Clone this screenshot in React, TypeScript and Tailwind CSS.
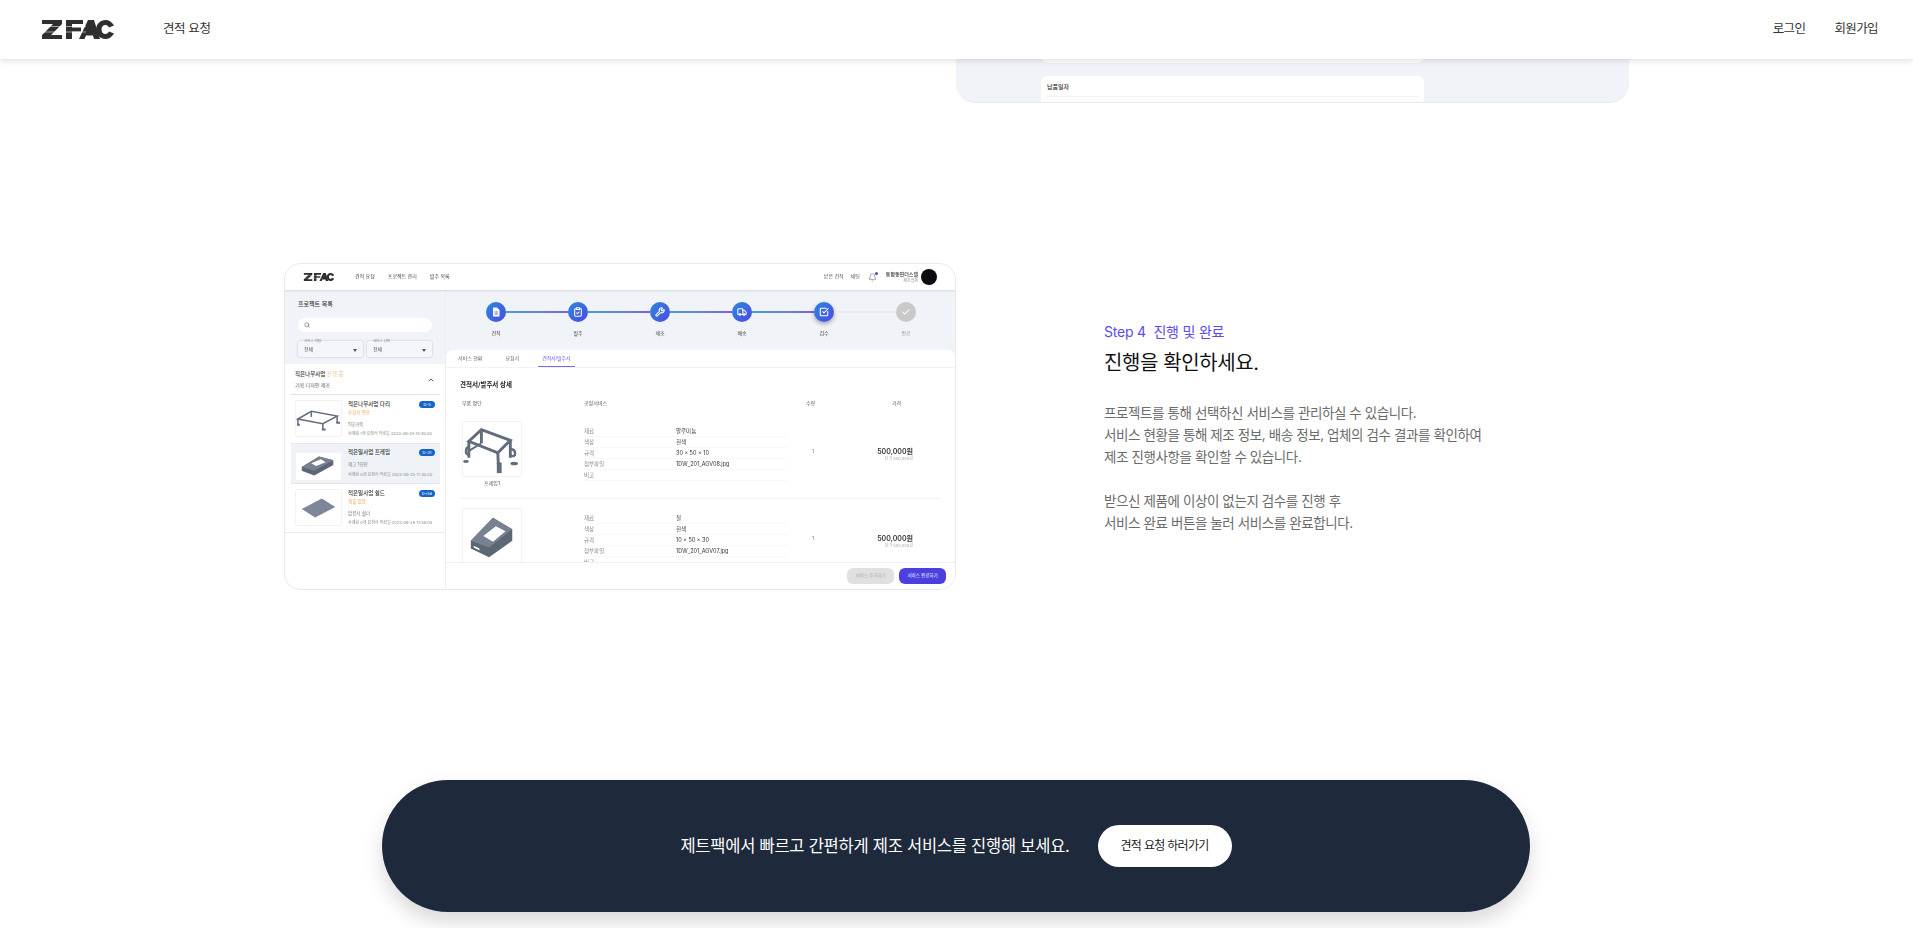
import { Bell, Check, ChevronUp, ClipboardCheck, Search, SquareCheckBig, Truck, Wrench } from 'lucide-react'

const FONT = "font-['Inter','Noto_Sans_CJK_KR',sans-serif]"

function Logo({ className }: { className: string }) {
  return (
    <svg viewBox="0 0 72 19" className={className} fill="#2f2f2f">
      <path d="M0 0h20v4L9 15h11v4H0v-4L11 4H0z" />
      <path d="M24 0h17v4H30v3.500h9v4h-9V19h-6z" />
      <path d="M37 19 46 0h6l6 19h-6l-1-3.500h-7L42.500 19z" />
      <path d="M72 5.500C70 2 67 0 63.500 0c-5 0-9.500 4-9.500 9.500S58.500 19 63.500 19c3.500 0 6.500-2 8.500-5.500l-5-2c-.8 1.500-2 2.500-3.500 2.500-2.500 0-4-2-4-4.500S61 5 63.500 5c1.500 0 2.700 1 3.500 2.500z" />
      <rect x="0" y="6" width="44" height="1" fill="#fff" opacity="0.55" />
      <rect x="0" y="11.500" width="44" height="1" fill="#fff" opacity="0.55" />
    </svg>
  )
}

function DocIcon() {
  return (
    <svg viewBox="0 0 10 10" className="w-[10px] h-[10px]">
      <path d="M2 .5h4L8.500 3v6.500H2z" fill="#fff" />
      <path d="M3.500 5h3.500M3.500 7h3.500" stroke="#2f6fdc" strokeWidth="0.9" />
    </svg>
  )
}

function FramePart({ className }: { className: string }) {
  return (
    <svg viewBox="0 0 60 56" className={className} fill="none" stroke="#626c7a" strokeWidth="3">
      <path d="M6 20 19 8l30 11-13 13z" />
      <path d="M6 20v17M36 32l1 20M49 19v18M19 8v14" />
      <path d="M19 22 6 30" strokeWidth="2" />
      <path d="M6 26c-2 0-3 2-3 5 0 2 2 3 3 3M49 28c3 0 5 2 5 5 0 2-2 3-5 2" strokeWidth="2.500" />
      <ellipse cx="3" cy="41" rx="3" ry="1.500" fill="#626c7a" stroke="none" />
      <ellipse cx="53" cy="43" rx="4" ry="1.800" fill="#626c7a" stroke="none" />
      <rect x="35" y="42" width="5" height="11" fill="#626c7a" stroke="none" />
    </svg>
  )
}

function BoxPart({ className }: { className: string }) {
  return (
    <svg viewBox="0 0 60 56" className={className}>
      <path d="M8 33 31 9l20 12v12L27 50 8 41z" fill="#5d6675" />
      <path d="M8 33 31 9l20 12-24 19z" fill="#78818f" />
      <path d="M21 28 34 18l10 5-13 11z" fill="#fff" />
      <path d="M11 38l6 3v2l-6-3z" fill="#fff" />
    </svg>
  )
}

function SideFrame({ className }: { className: string }) {
  return (
    <svg viewBox="0 0 47 37" className={className} fill="none" stroke="#666f7d" strokeWidth="1.600">
      <path d="M2 19 16 11l27 5-15 8z" />
      <path d="M2 19v6M28 24v6M43 16v7M16 11v6" />
      <path d="M1 25h3M27 30h4M42 23h4" strokeWidth="2" />
    </svg>
  )
}

function SideBox({ className }: { className: string }) {
  return (
    <svg viewBox="0 0 47 29" className={className}>
      <path d="M6 15 24 4l15 4v5L19 24 6 19z" fill="#5d6675" />
      <path d="M6 15 24 4l15 4-20 11z" fill="#78818f" />
      <path d="M16 11 26 7l5 3-10 4z" fill="#fff" />
    </svg>
  )
}

function PlatePart({ className }: { className: string }) {
  return (
    <svg viewBox="0 0 47 37" className={className}>
      <path d="M6 20 27 9l14 9-21 11z" fill="#7d8798" />
    </svg>
  )
}

const STEPS = [
  { label: '견적', icon: DocIcon },
  { label: '발주', icon: () => <ClipboardCheck size={10} color="#fff" strokeWidth={2.5} /> },
  { label: '제조', icon: () => <Wrench size={10} color="#fff" strokeWidth={2.5} /> },
  { label: '배송', icon: () => <Truck size={10} color="#fff" strokeWidth={2.5} /> },
  { label: '검수', icon: () => <SquareCheckBig size={10} color="#fff" strokeWidth={2.5} /> },
]

function Stepper() {
  return (
    <div className="h-[60px] pl-[9px] pt-[12px] bg-[#f0f3f8]">
      <div className="flex items-center pl-[31px]">
        {STEPS.map(s => (
          <div key={s.label} className="flex items-center">
            <div className={`w-5 h-5 rounded-full flex items-center justify-center bg-gradient-to-br from-[#2388dc] to-[#4a44e4] ${s.label === '검수' ? 'shadow-[0_2px_4px_rgba(0,0,0,0.35)]' : ''}`}>
              <s.icon />
            </div>
            {s.label === '검수' ? (
              <div className="w-[62px] h-[2px] bg-[#e9ecf1]" />
            ) : (
              <div className="w-[62px] h-[2px] bg-gradient-to-r from-[#3f9fdc] to-[#7a62e2]" />
            )}
          </div>
        ))}
        <div className="w-5 h-5 rounded-full flex items-center justify-center bg-[#c9c9c9]">
          <Check size={10} color="#fff" strokeWidth={2.5} />
        </div>
      </div>
      <div className="flex mt-[7px] text-[5px] leading-[8px] text-[#444]">
        {[...STEPS.map(s => s.label), '완료'].map(l => (
          <div key={l} className={`w-[82px] text-center ${l === '완료' ? 'text-[#999]' : ''}`}>{l}</div>
        ))}
      </div>
    </div>
  )
}

function SpecRows({ rows }: { rows: [string, string][] }) {
  return (
    <div className="w-[204px] text-[5.500px]">
      {rows.map(([k, v]) => (
        <div key={k} className="flex h-[11px] items-center">
          <div className="w-[92px] h-full flex items-center border-b border-[#f8f8f8] text-[#888]">{k}</div>
          <div className="flex-1 h-full flex items-center border-b border-[#f8f8f8] text-[#333]">{v}</div>
        </div>
      ))}
    </div>
  )
}

function OrderRow({ part, caption, rows, sub }: { part: React.ReactNode; caption?: string; rows: [string, string][]; sub: string }) {
  return (
    <div className="flex pl-[2px]">
      <div className="w-[122px]">
        <div className="w-[60px] h-[56px] rounded-[2px] border border-[#f1f1f1] flex items-center justify-center">{part}</div>
        {caption && <div className="w-[60px] mt-[3px] text-center text-[5px] leading-[6px] text-[#555]">{caption}</div>}
      </div>
      <div className="pt-[5px]">
        <SpecRows rows={rows} />
      </div>
      <div className="w-[30px] pl-[24px] pt-[26px] text-[5px] leading-[8px] text-[#777]">1</div>
      <div className="w-[95px] pt-[26px] text-right">
        <div className="text-[7px] leading-[9px] font-semibold text-[#333]">500,000원</div>
        <div className="text-[4px] leading-[6px] text-[#aaa]">{sub}</div>
      </div>
    </div>
  )
}

function ProjectItem({ title, status, note, date, dday, part, active, h }: {
  title: string; status?: string; note: string; date: string; dday: string; part: React.ReactNode; active?: boolean; h: string
}) {
  return (
    <div className={`flex gap-[6px] pl-[4px] pr-[5px] ${h} ${active ? 'bg-[#eff3f8] border-y border-[#e6e8ec] pt-[4px]' : 'pt-[5px]'}`}>
      <div className={`w-[47px] shrink-0 bg-white rounded-[2px] border border-[#f3f3f3] flex items-center justify-center ${active ? 'h-[29px] mt-[4px]' : 'h-[37px]'}`}>{part}</div>
      <div className="flex-1 min-w-0">
        <div className="flex justify-between items-center h-[9px]">
          <span className="text-[5.500px] font-medium text-[#333]">{title}</span>
          <span className="w-[16px] h-[7px] rounded-full bg-[#1565c8] text-white text-[4px] leading-[7px] text-center">{dday}</span>
        </div>
        {status && <div className="text-[4.500px] leading-[7px] text-[#f5a94e]">{status}</div>}
        <div className={`text-[4.500px] leading-[7px] text-[#777] ${status ? 'mt-[5px]' : 'mt-[4px]'}`}>{note}</div>
        <div className={`text-[4px] leading-[6px] text-[#888] whitespace-nowrap ${status ? 'mt-[3px]' : 'mt-[4px]'}`}>{date}</div>
      </div>
    </div>
  )
}

function SelectBox({ label }: { label: string }) {
  return (
    <div className="flex-1 h-[16px] rounded-[2px] bg-[#f4f6fa] shadow-[0_0_2px_rgba(0,0,0,0.25)] px-[6px] relative flex items-center justify-between">
      <span className="absolute -top-[2px] left-[6px] text-[3.500px] leading-[4px] text-[#888]">{label}</span>
      <span className="text-[5px] text-[#555] mt-[1px]">전체</span>
      <svg viewBox="0 0 4 3" className="w-[4px] h-[3px] mt-[2px]"><path d="M0 0h4L2 3z" fill="#555" /></svg>
    </div>
  )
}

function Mockup() {
  return (
    <div className="w-[672px] h-[327px] rounded-[16px] border border-[#e9e9e9] overflow-hidden bg-white blur-[0.4px]">
      {/* mock header */}
      <div className="h-[26px] flex items-center pl-[18px] pr-[18px] shadow-[0_1px_2px_rgba(0,0,0,0.12)] relative">
        <Logo className="w-[32px] h-[8px]" />
        <div className="flex gap-[13px] ml-[20px] text-[5px] text-[#444]">
          <span>견적 요청</span><span>프로젝트 관리</span><span>발주 목록</span>
        </div>
        <div className="flex-1" />
        <div className="flex gap-[7px] text-[5px] text-[#555] items-center">
          <span>받은 견적</span><span>채팅</span>
        </div>
        <div className="relative ml-[8px]">
          <Bell size={9} color="#666" strokeWidth={1.5} />
          <div className="absolute -top-[1px] -right-[1px] w-[3px] h-[3px] rounded-full bg-[#4a44e4]" />
        </div>
        <div className="ml-[9px] text-right">
          <div className="text-[5px] leading-[7px] text-[#333] font-medium">통합동연더스쉘</div>
          <div className="text-[4px] leading-[5px] text-[#999]">제조업체</div>
        </div>
        <div className="ml-[3px] w-4 h-4 rounded-full bg-[#0c0c10]" />
      </div>

      <div className="flex h-[299px]">
        {/* sidebar */}
        <div className="w-[161px] shrink-0 border-r border-[#eeeeee]">
          <div className="h-[74px] bg-[#f0f3f8] px-[13px] pt-[10px]">
            <div className="text-[6px] leading-[8px] font-medium text-[#333]">프로젝트 목록</div>
            <div className="mt-[10px] h-[14px] rounded-full bg-white flex items-center pl-[6px]">
              <Search size={6} color="#666" strokeWidth={2.5} />
            </div>
            <div className="flex gap-[4px] mt-[9px]">
              <SelectBox label="서비스 현황" />
              <SelectBox label="서비스 상태" />
            </div>
          </div>
          <div className="pl-[6px] pr-[5px]">
            <div className="pl-[4px] pr-[5px] pt-[6px] flex justify-between h-[31px] border-b border-[#e4e4e4]">
              <div>
                <div className="text-[5.500px] leading-[8px] font-medium text-[#333]">직은나무사업 <span className="text-[#f5c48e] font-normal">진행 중</span></div>
                <div className="text-[5px] leading-[8px] mt-[3px] text-[#555]">기획 디자인 제조</div>
              </div>
              <ChevronUp size={8} color="#444" strokeWidth={2.5} className="mt-[6px]" />
            </div>
            <ProjectItem h="h-[48px]" title="적은나무사업 다리" status="요청서 완료" note="5묘거북" date="사례힘 1개   요청서 작성일 2023-09-26 14:40:05" dday="D-5" part={<SideFrame className="w-[47px] h-[37px]" />} />
            <ProjectItem h="h-[41px]" active title="적은일사업 프레임" note="제고 1묘인" date="사례힘 0개   요청서 작성일 2023-09-25 17:30:20" dday="D-31" part={<SideBox className="w-[47px] h-[29px]" />} />
            <ProjectItem h="h-[48px]" title="적은일사업 쉴드" status="제출 없음" note="없음서 쉴더" date="사례힘 0개   요청서 작성일 2023-09-26 17:50:05" dday="D+58" part={<PlatePart className="w-[47px] h-[37px]" />} />
          </div>
          <div className="border-b border-[#ececec]" />
        </div>

        {/* main */}
        <div className="flex-1 min-w-0 flex flex-col bg-[#f0f3f8]">
          <Stepper />
          <div className="flex-1 min-h-0 bg-white rounded-t-[7px] flex flex-col">
            <div className="h-[18px] flex items-center pl-[12px] gap-[23px] border-b border-[#f3f3f3] text-[5px] text-[#666] shrink-0">
              <span>서비스 현황</span>
              <span>요청서</span>
              <span className="relative text-[#6a55e8] tracking-[-0.2px]">
                견적서/발주서
                <span className="absolute left-[-4px] right-[-5px] -bottom-[5px] h-[1px] bg-[#7a68ea]" />
              </span>
            </div>
            <div className="flex-1 min-h-0 overflow-hidden px-[14px]">
              <div className="mt-[13px] text-[6.500px] leading-[9px] font-semibold text-[#222]">견적서/발주서 상세</div>
              <div className="flex mt-[9px] pl-[2px] text-[5px] leading-[8px] text-[#555]">
                <span className="w-[122px]">부품 명단</span>
                <span className="w-[222px]">공정서비스</span>
                <span className="w-[86px]">수량</span>
                <span>가격</span>
              </div>
              <div className="mt-[14px] pb-[12px] border-b border-[#f4f4f4]">
                <OrderRow part={<FramePart className="w-[58px] h-[54px]" />} caption="프레임1" sub="단가 500,000원" rows={[['재료', '알루미늄'], ['색상', '흰색'], ['규격', '30 x 50 x 10'], ['첨부파일', '1DW_201_AGV08.jpg'], ['비고', '']]} />
              </div>
              <div className="mt-[9px]">
                <OrderRow part={<BoxPart className="w-[58px] h-[54px]" />} sub="단가 500,000원" rows={[['재료', '철'], ['색상', '흰색'], ['규격', '10 x 50 x 30'], ['첨부파일', '1DW_201_AGV07.jpg'], ['비고', '']]} />
              </div>
            </div>
            <div className="h-[27px] shrink-0 bg-white border-t border-[#f0f0f0] flex items-center justify-end gap-[5px] pr-[9px]">
              <div className="w-[47px] h-[16px] rounded-[6px] bg-[#e0e0e0] text-[#aaa] text-[4.500px] flex items-center justify-center">서비스 추가하기</div>
              <div className="w-[47px] h-[16px] rounded-[6px] bg-[#4a3fe0] text-white text-[4.500px] flex items-center justify-center">서비스 완료하기</div>
            </div>
          </div>
        </div>
      </div>
    </div>
  )
}

export default function App() {
  return (
    <div className={`${FONT} h-[928px] overflow-hidden bg-white relative flex flex-col`}>
      {/* top bar */}
      <header className="absolute top-0 inset-x-0 z-10 h-[59px] bg-white shadow-[0_2px_6px_rgba(0,0,0,0.12)] flex items-center pl-[42px] pr-[35px]">
        <Logo className="w-[72px] h-[19px]" />
        <a className="ml-[49px] text-[12.500px] tracking-[-0.4px] text-[#333]">견적 요청</a>
        <div className="flex-1" />
        <a className="text-[12.500px] tracking-[-0.6px] text-[#333]">로그인</a>
        <a className="ml-[29px] text-[12.500px] tracking-[-0.6px] text-[#333]">회원가입</a>
      </header>

      {/* previous step, scrolled mostly away */}
      <div className="ml-[956px] w-[673px] h-[103px] shrink-0 bg-[#f0f3f8] border-b border-[#e8ebf0] rounded-b-[20px] overflow-hidden pl-[85px]">
        <div className="w-[383px] h-[63px] bg-white rounded-b-[6px] shadow-[0_0_2px_rgba(0,0,0,0.05)]" />
        <div className="w-[383px] h-[27px] mt-[13px] bg-white rounded-t-[6px] px-[6px]">
          <div className="h-[21px] flex items-center border-b border-[#f0f2f5] text-[6px] font-medium text-[#333]">납품일자</div>
        </div>
      </div>

      {/* step 4 */}
      <section className="flex mt-[160px] pl-[284px] shrink-0">
        <Mockup />
        <div className="ml-[148px] pt-[57px]">
          <div className="text-[14px] leading-[24px] tracking-[-0.2px] text-[#5b4bf0]">Step 4&nbsp; 진행 및 완료</div>
          <h2 className="mt-[4px] text-[20px] leading-[30px] tracking-[-0.4px] font-normal text-[#111]">진행을 확인하세요.</h2>
          <p className="mt-[24px] text-[13.500px] leading-[22px] tracking-[-0.4px] text-[#6b6b6b]">
            프로젝트를 통해 선택하신 서비스를 관리하실 수 있습니다.<br />
            서비스 현황을 통해 제조 정보, 배송 정보, 업체의 검수 결과를 확인하여<br />
            제조 진행사항을 확인할 수 있습니다.
          </p>
          <p className="mt-[22px] text-[13.500px] leading-[22px] tracking-[-0.4px] text-[#6b6b6b]">
            받으신 제품에 이상이 없는지 검수를 진행 후<br />
            서비스 완료 버튼을 눌러 서비스를 완료합니다.
          </p>
        </div>
      </section>

      {/* call to action */}
      <div className="mt-[190px] ml-[382px] w-[1148px] h-[132px] shrink-0 rounded-full bg-[#1e293b] shadow-[0_10px_20px_rgba(0,0,0,0.15)] flex items-center justify-center gap-[28px]">
        <span className="text-[16.500px] tracking-[-0.25px] text-white">제트팩에서 빠르고 간편하게 제조 서비스를 진행해 보세요.</span>
        <button className="w-[134px] h-[42px] rounded-full bg-white text-[12px] tracking-[-0.7px] text-[#222]">견적 요청 하러가기</button>
      </div>
    </div>
  )
}
